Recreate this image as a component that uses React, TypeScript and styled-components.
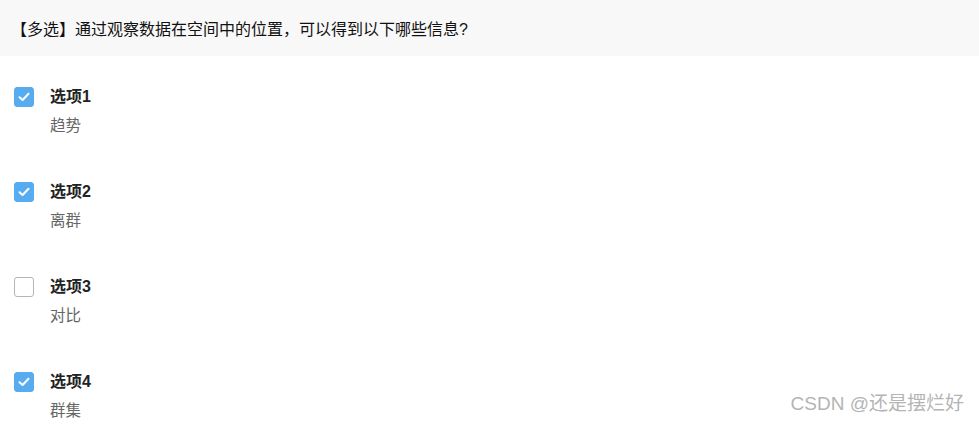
import React from 'react'
import styled, { createGlobalStyle } from 'styled-components'

const GlobalStyle = createGlobalStyle`
  html, body {
    margin: 0;
    padding: 0;
    background: #fff;
  }
  body {
    font-family: "Liberation Sans", Arial, "Noto Sans CJK SC", sans-serif;
    color: #333;
  }
`

const Page = styled.div`
  position: relative;
  width: 979px;
  height: 424px;
  overflow: hidden;
`

const Question = styled.div`
  height: 56px;
  background: #f8f8f8;
  display: flex;
  align-items: center;
  padding-left: 11px;
  font-size: 16px;
  color: #111;
`

const OptionList = styled.div`
  display: flex;
  flex-direction: column;
  padding: 31px 0 0 14px;
  gap: 46px;
`

const Option = styled.label`
  display: flex;
  gap: 16px;
`

const Box = styled.span<{ $checked: boolean }>`
  flex: none;
  width: 20px;
  height: 20px;
  box-sizing: border-box;
  border-radius: 3px;
  display: flex;
  align-items: center;
  justify-content: center;
  background: ${({ $checked }) => ($checked ? '#57acef' : '#fff')};
  border: 1px solid ${({ $checked }) => ($checked ? '#57acef' : '#b5b5b5')};
`

const Texts = styled.div`
  display: flex;
  flex-direction: column;
  gap: 9px;
`

const Title = styled.span`
  font-size: 16px;
  font-weight: bold;
  color: #222;
  line-height: 20px;
`

const Desc = styled.span`
  font-size: 15.5px;
  color: #666;
  line-height: 20px;
`

const Watermark = styled.div`
  position: absolute;
  right: 15px;
  bottom: 9px;
  font-size: 19px;
  color: #b4b4b4;
`

const options = [
  { title: '选项1', desc: '趋势', checked: true },
  { title: '选项2', desc: '离群', checked: true },
  { title: '选项3', desc: '对比', checked: false },
  { title: '选项4', desc: '群集', checked: true },
]

const Check = () => (
  <svg width="14" height="14" viewBox="0 0 14 14">
    <path d="M2.5 7.2 L5.6 10 L11.5 3.8" fill="none" stroke="#fff" strokeWidth="2" strokeLinecap="round" strokeLinejoin="round" />
  </svg>
)

const App: React.FC = () => (
  <Page>
    <GlobalStyle />
    <Question>【多选】通过观察数据在空间中的位置，可以得到以下哪些信息?</Question>
    <OptionList>
      {options.map((o) => (
        <Option key={o.title}>
          <Box $checked={o.checked}>{o.checked && <Check />}</Box>
          <Texts>
            <Title>{o.title}</Title>
            <Desc>{o.desc}</Desc>
          </Texts>
        </Option>
      ))}
    </OptionList>
    <Watermark>CSDN @还是摆烂好</Watermark>
  </Page>
)

export default App
